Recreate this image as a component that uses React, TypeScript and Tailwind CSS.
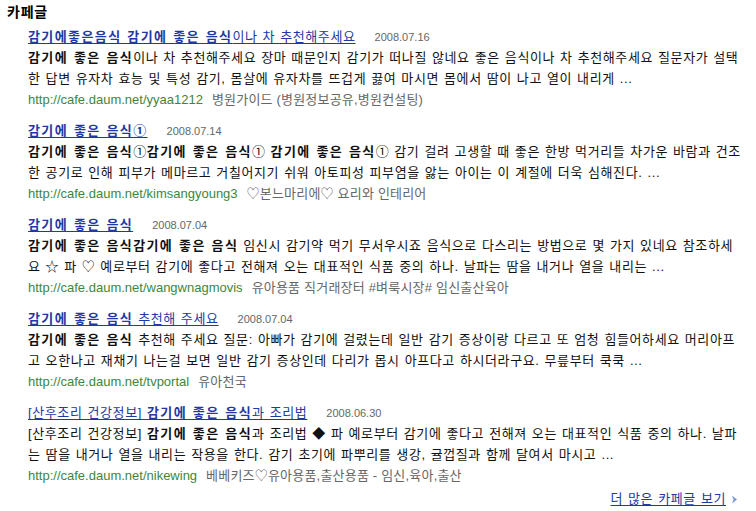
import React from "react";

type Seg = { t: string; b?: boolean };
type Item = {
  title: Seg[];
  date: string;
  body: Seg[][];
  url: string;
  name: string;
};

const K = "감기에 좋은 음식";

const items: Item[] = [
  {
    title: [{ t: "감기에좋은음식 감기에 좋은 음식", b: true }, { t: "이나 차 추천해주세요" }],
    date: "2008.07.16",
    body: [
      [{ t: K, b: true }, { t: "이나 차 추천해주세요 장마 때문인지 감기가 떠나질 않네요 좋은 음식이나 차 추천해주세요 질문자가 설택" }],
      [{ t: "한 답변 유자차 효능 및 특성 감기, 몸살에 유자차를 뜨겁게 끓여 마시면 몸에서 땀이 나고 열이 내리게 ..." }],
    ],
    url: "http://cafe.daum.net/yyaa1212",
    name: "병원가이드 (병원정보공유,병원컨설팅)",
  },
  {
    title: [{ t: "감기에 좋은 음식①", b: true }],
    date: "2008.07.14",
    body: [
      [
        { t: K, b: true },
        { t: "①" },
        { t: K, b: true },
        { t: "① " },
        { t: K, b: true },
        { t: "① 감기 걸려 고생할 때 좋은 한방 먹거리들 차가운 바람과 건조" },
      ],
      [{ t: "한 공기로 인해 피부가 메마르고 거칠어지기 쉬워 아토피성 피부염을 앓는 아이는 이 계절에 더욱 심해진다. ..." }],
    ],
    url: "http://cafe.daum.net/kimsangyoung3",
    name: "♡본느마리에♡ 요리와 인테리어",
  },
  {
    title: [{ t: K, b: true }],
    date: "2008.07.04",
    body: [
      [{ t: "감기에 좋은 음식감기에 좋은 음식", b: true }, { t: " 임신시 감기약 먹기 무서우시죠 음식으로 다스리는 방법으로 몇 가지 있네요 참조하세" }],
      [{ t: "요 ☆ 파 ♡ 예로부터 감기에 좋다고 전해져 오는 대표적인 식품 중의 하나. 날파는 땀을 내거나 열을 내리는 ..." }],
    ],
    url: "http://cafe.daum.net/wangwnagmovis",
    name: "유아용품 직거래장터 #벼룩시장# 임신출산육아",
  },
  {
    title: [{ t: K, b: true }, { t: " 추천해 주세요" }],
    date: "2008.07.04",
    body: [
      [{ t: K, b: true }, { t: " 추천해 주세요 질문: 아빠가 감기에 걸렸는데 일반 감기 증상이랑 다르고 또 엄청 힘들어하세요 머리아프" }],
      [{ t: "고 오한나고 재채기 나는걸 보면 일반 감기 증상인데 다리가 몹시 아프다고 하시더라구요. 무릎부터 쿡쿡 ..." }],
    ],
    url: "http://cafe.daum.net/tvportal",
    name: "유아천국",
  },
  {
    title: [{ t: "[산후조리 건강정보] " }, { t: K, b: true }, { t: "과 조리법" }],
    date: "2008.06.30",
    body: [
      [
        { t: "[산후조리 건강정보] " },
        { t: K, b: true },
        { t: "과 조리법 ◆ 파 예로부터 감기에 좋다고 전해져 오는 대표적인 식품 중의 하나. 날파" },
      ],
      [{ t: "는 땀을 내거나 열을 내리는 작용을 한다. 감기 초기에 파뿌리를 생강, 귤껍질과 함께 달여서 마시고 ..." }],
    ],
    url: "http://cafe.daum.net/nikewing",
    name: "베베키즈♡유아용품,출산용품 - 임신,육아,출산",
  },
];

function Segs({ segs }: { segs: Seg[] }) {
  return (
    <>
      {segs.map((s, i) =>
        s.b ? (
          <b key={i} className="font-bold tracking-[1.4px]">
            {s.t}
          </b>
        ) : (
          <span key={i}>{s.t}</span>
        )
      )}
    </>
  );
}

export default function App() {
  return (
    <div
      className="w-[756px] h-[511px] bg-white text-black overflow-hidden"
      style={{ fontFamily: '"Liberation Sans", "Noto Sans CJK KR", sans-serif' }}
    >
      <div className="pl-[7px] pt-[3px] h-[27px] text-[14px] leading-[18px] font-bold tracking-[0.8px]">카페글</div>
      <div className="pl-[28px] flex flex-col gap-[10px]">
        {items.map((it, idx) => (
          <div key={idx} className="flex flex-col">
            <div className="h-[20px] flex items-center whitespace-nowrap">
              <a className="text-[13px] text-[#2338a3] underline underline-offset-[2px] tracking-[0.6px] [word-spacing:0.8px] cursor-pointer">
                <Segs segs={it.title} />
              </a>
              <span className="ml-[19px] text-[11px] text-[#666666]">{it.date}</span>
            </div>
            {it.body.map((line, li) => (
              <div
                key={li}
                className="h-[21px] leading-[21px] text-[13px] whitespace-nowrap tracking-[0.6px] [word-spacing:0.8px] text-[#111111]"
              >
                <Segs segs={line} />
              </div>
            ))}
            <div className="h-[22px] flex items-center whitespace-nowrap text-[13px]">
              <span className="text-[#3c873c]">{it.url}</span>
              <span className="ml-[9px] text-[#666666] tracking-[0.2px]">{it.name}</span>
            </div>
          </div>
        ))}
      </div>
      <div className="mt-[2px] pr-[18px] flex justify-end items-center h-[20px]">
        <a className="text-[13px] text-[#2338a3] underline underline-offset-[2px] tracking-[0.6px] [word-spacing:0.8px] cursor-pointer">
          더 많은 카페글 보기
        </a>
        <svg width="7" height="9" viewBox="0 0 7 9" className="ml-[5px]">
          <polygon points="1,0.5 6,4.5 1,8.5 2.5,4.5" fill="#7b97d8" />
        </svg>
      </div>
    </div>
  );
}
